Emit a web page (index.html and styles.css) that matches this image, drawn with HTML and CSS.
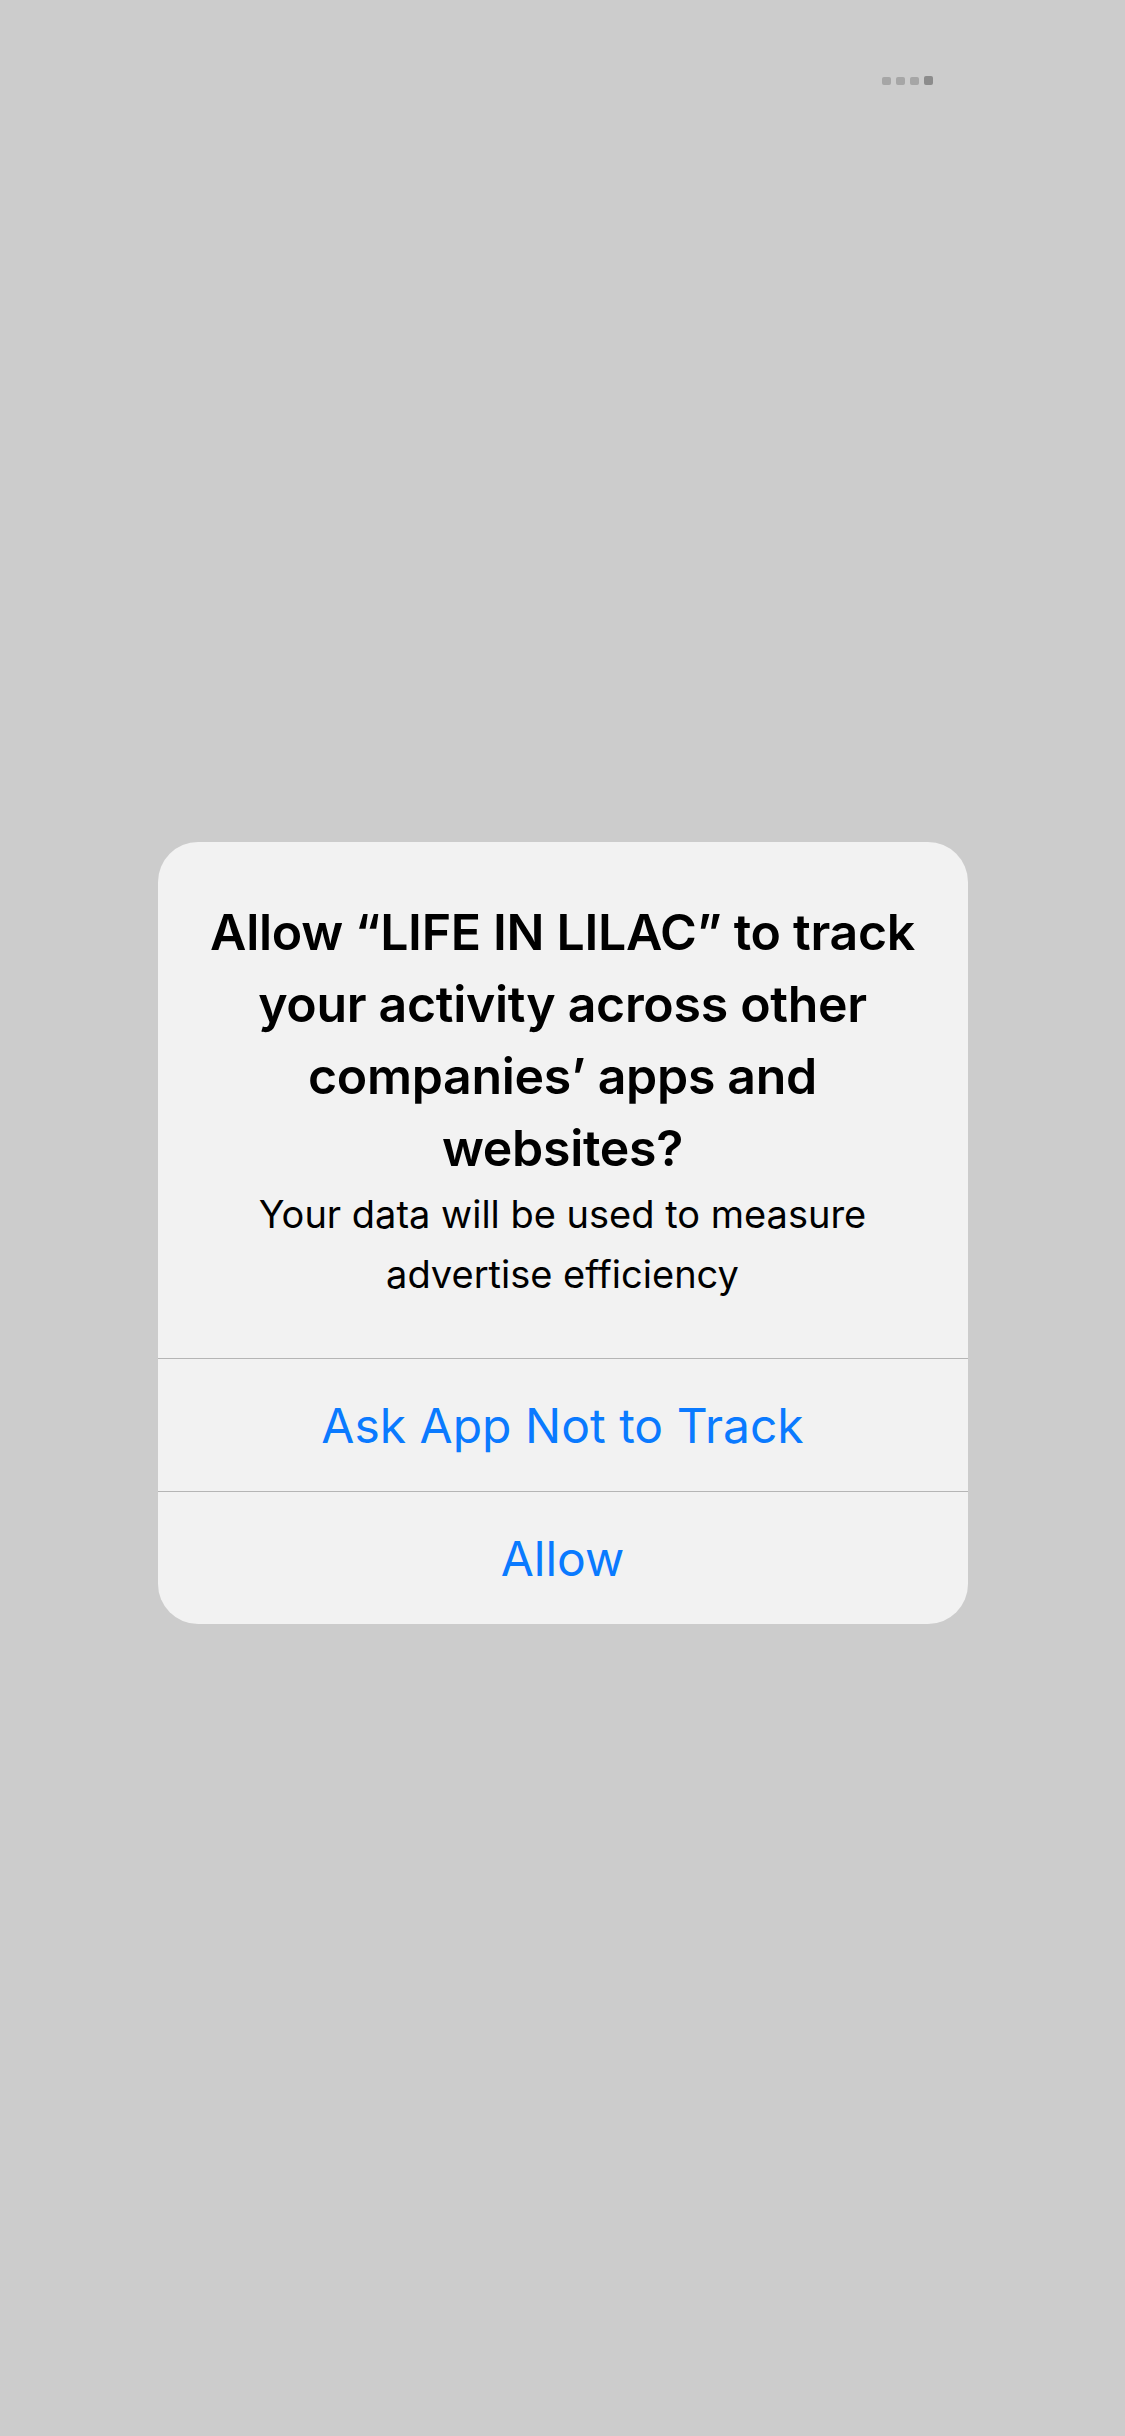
FILE: index.html
```html
<!DOCTYPE html>
<html lang="en">
<head>
  <meta charset="UTF-8">
  <title>Tracking Permission</title>
  <meta name="viewport" content="width=device-width, initial-scale=1.0" />
  <link rel="stylesheet" href="styles.css">
</head>
<body>

<header class="status-bar">
  <div class="signal">
    <span class="dot"></span>
    <span class="dot"></span>
    <span class="dot"></span>
    <span class="dot last"></span>
  </div>
</header>

<div class="alert">
  <div class="alert-body">
    <h1 class="alert-title">Allow “LIFE IN LILAC” to track your activity across other companies’ apps and websites?</h1>
    <p class="alert-message">Your data will be used to measure advertise efficiency</p>
  </div>
  <button class="alert-action">Ask App Not to Track</button>
  <button class="alert-action">Allow</button>
</div>

</body>
</html>
```

FILE: styles.css
```css
/* ============================
   Base
============================ */
* {
  box-sizing: border-box;
}

body {
  margin: 0;
  min-height: 2436px;
  background: #cccccc;
  font-family: Inter, "Noto Sans", sans-serif;
  color: #000;
}

/* ============================
   Status bar
============================ */
.status-bar {
  height: 120px;
  display: flex;
  justify-content: flex-end;
  align-items: flex-start;
  padding: 76px 192px 0 0;
}

.signal {
  display: flex;
  align-items: center;
  gap: 5px;
}

.dot {
  width: 9px;
  height: 8px;
  border-radius: 2px;
  background: #a6a6a6;
}

.dot.last {
  height: 9px;
  background: #8c8c8c;
}

/* ============================
   Alert
============================ */
.alert {
  width: 810px;
  margin: 722px auto 0;
  background: #f2f2f2;
  border-radius: 40px;
  overflow: hidden;
}

.alert-body {
  padding: 54px 40px 54px;
  text-align: center;
}

.alert-title {
  margin: 0;
  font-size: 50px;
  font-weight: 600;
  line-height: 72px;
  letter-spacing: -0.3px;
}

.alert-message {
  margin: 0;
  font-size: 38px;
  font-weight: 400;
  line-height: 60px;
}

.alert-action {
  display: block;
  width: 100%;
  height: 133px;
  border: none;
  border-top: 1px solid #b5b5b5;
  background: none;
  color: #0a7aff;
  font-family: inherit;
  font-size: 48px;
  font-weight: 400;
  padding: 0;
  cursor: pointer;
}
```
